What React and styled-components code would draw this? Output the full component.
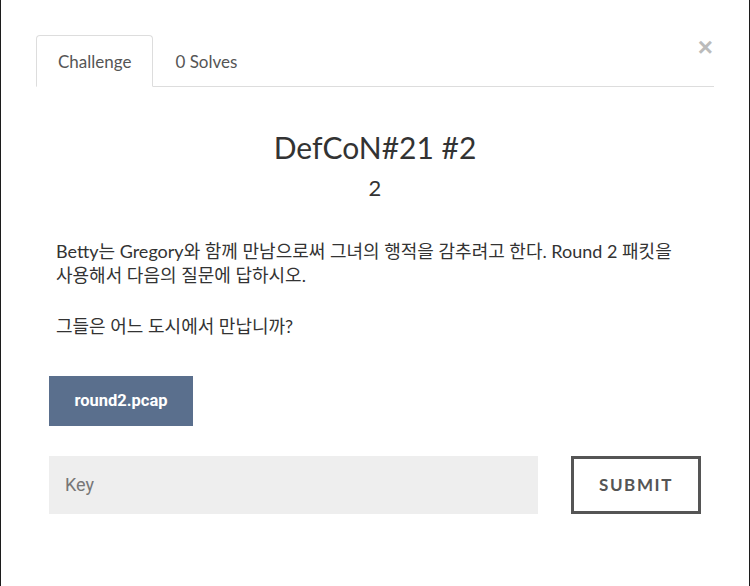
import React from 'react';
import styled, { createGlobalStyle } from 'styled-components';

const GlobalStyle = createGlobalStyle`
  html, body {
    margin: 0;
    padding: 0;
    background: #1c1c1c;
  }
  * {
    box-sizing: border-box;
  }
`;

const Modal = styled.div`
  position: relative;
  margin: 0 1px;
  height: 586px;
  background: #fff;
  padding: 35px 35px 0 35px;
  font-family: Lato, "Noto Sans CJK KR", sans-serif;
  color: #333;
`;

const CloseButton = styled.button`
  position: absolute;
  top: 34px;
  right: 36px;
  border: none;
  background: none;
  padding: 0;
  font-family: "Liberation Sans", Arial, sans-serif;
  font-size: 26px;
  font-weight: 700;
  line-height: 1;
  color: #bbb;
  cursor: pointer;
`;

const TabList = styled.ul`
  display: flex;
  margin: 0;
  padding: 0;
  list-style: none;
  border-bottom: 1px solid #ddd;
  width: 678px;
`;

const Tab = styled.li`
  margin-bottom: -1px;
  padding: 0 21px;
  height: 52px;
  display: flex;
  align-items: center;
  font-size: 17px;
  color: #555;
  border: 1px solid ${(p) => (p.active ? '#ddd' : 'transparent')};
  border-bottom-color: ${(p) => (p.active ? '#fff' : 'transparent')};
  border-radius: 4px 4px 0 0;
  background: ${(p) => (p.active ? '#fff' : 'transparent')};
`;

const Body = styled.div`
  padding: 0 13px;
`;

const Title = styled.h2`
  margin: 43px 0 0;
  text-align: center;
  font-size: 30px;
  font-weight: 400;
  line-height: 34px;
  color: #333;
`;

const Value = styled.h3`
  margin: 11px 0 0;
  text-align: center;
  font-size: 22px;
  font-weight: 400;
  line-height: 26px;
  color: #333;
`;

const Description = styled.div`
  margin-top: 39px;
  padding-left: 7px;
  font-size: 18px;
  line-height: 23.5px;
  color: #333;

  p {
    margin: 0 0 28px;
  }
`;

const FileButton = styled.a`
  display: inline-flex;
  align-items: center;
  justify-content: center;
  margin-top: 9px;
  width: 144px;
  height: 50px;
  background: #5a6f8d;
  color: #fff;
  font-family: Roboto, "Liberation Sans", sans-serif;
  font-weight: 700;
  font-size: 16.5px;
  text-decoration: none;
`;

const SubmitRow = styled.div`
  display: flex;
  align-items: stretch;
  gap: 33px;
  margin-top: 30px;
  height: 58px;
`;

const KeyInput = styled.input`
  flex: 0 0 489px;
  width: 489px;
  border: none;
  background: #eee;
  padding: 0 16px;
  font-family: Roboto, "Liberation Sans", sans-serif;
  font-size: 18px;
  color: #333;
  outline: none;

  &::placeholder {
    color: #777;
  }
`;

const SubmitButton = styled.button`
  flex: 0 0 130px;
  border: 3px solid #555;
  background: #fff;
  font-family: Lato, sans-serif;
  font-weight: 700;
  font-size: 17px;
  letter-spacing: 1.6px;
  color: #555;
  cursor: pointer;
`;

export default function App() {
  return (
    <>
      <GlobalStyle />
      <Modal>
        <CloseButton aria-label="Close">×</CloseButton>
        <TabList>
          <Tab active>Challenge</Tab>
          <Tab>0 Solves</Tab>
        </TabList>
        <Body>
          <Title>DefCoN#21 #2</Title>
          <Value>2</Value>
          <Description>
            <p>
              Betty는 Gregory와 함께 만남으로써 그녀의 행적을 감추려고 한다. Round 2 패킷을
              <br />
              사용해서 다음의 질문에 답하시오.
            </p>
            <p>그들은 어느 도시에서 만납니까?</p>
          </Description>
          <FileButton href="#">round2.pcap</FileButton>
          <SubmitRow>
            <KeyInput placeholder="Key" />
            <SubmitButton>SUBMIT</SubmitButton>
          </SubmitRow>
        </Body>
      </Modal>
    </>
  );
}
